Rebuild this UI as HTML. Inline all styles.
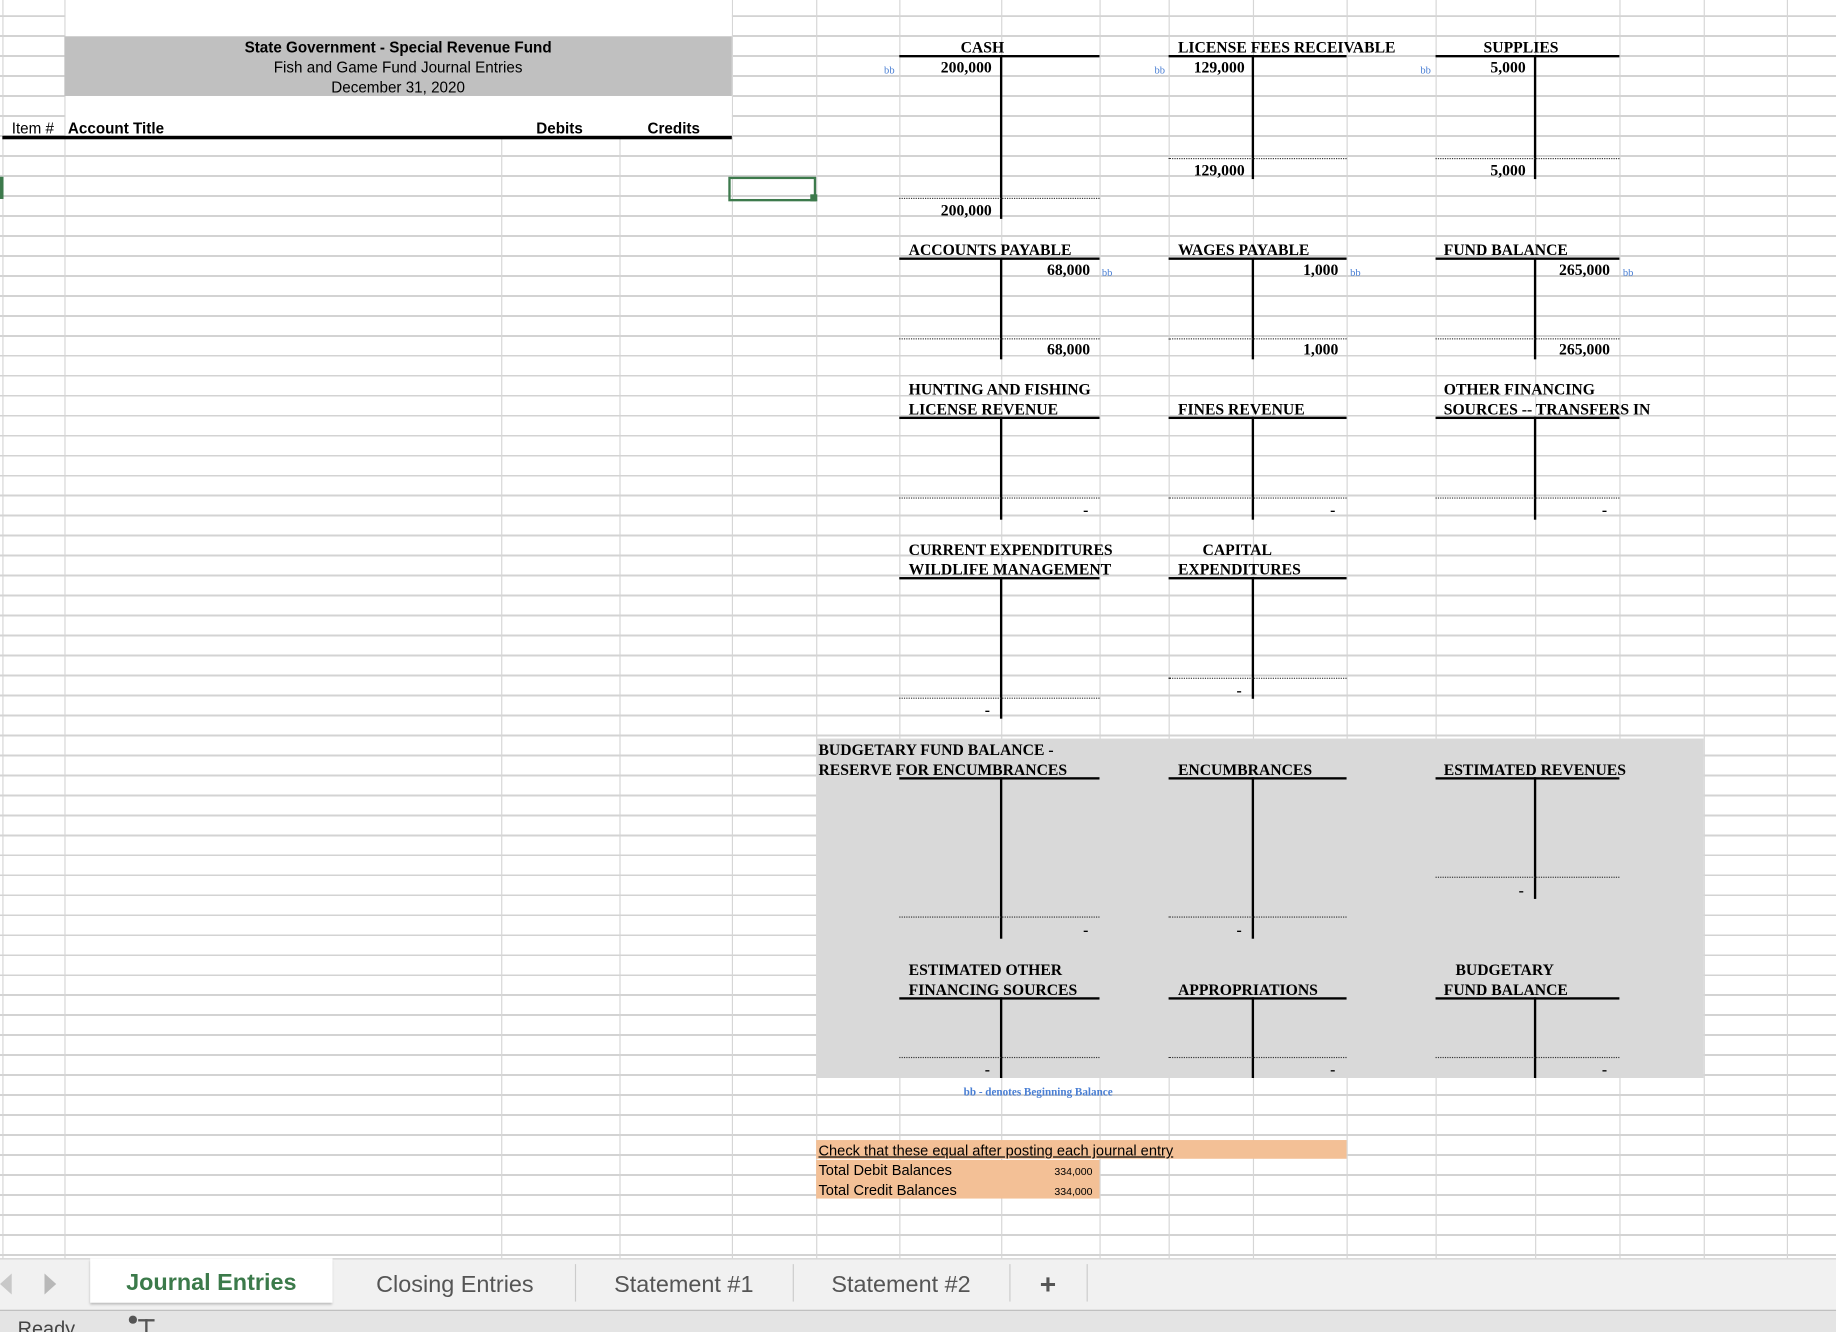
<!DOCTYPE html>
<html><head><meta charset="utf-8"><style>
html,body{margin:0;padding:0;background:#fff;}
body{width:1836px;height:1332px;overflow:hidden;position:relative;}
#w{position:absolute;left:0;top:0;width:1568px;height:1138px;transform:scale(1.17092,1.17047);transform-origin:0 0;overflow:hidden;}
#grid{position:absolute;left:0;top:13.3px;width:1568px;height:1062px;
background-image:repeating-linear-gradient(to bottom,#d3d3d3 0,#d3d3d3 1.6px,transparent 1.6px,transparent 17.07px);}
.c{position:absolute;top:0;width:1px;height:1075px;background:#d6d6d6;}
.a{position:absolute;white-space:nowrap;line-height:14px;}
.t{position:absolute;white-space:nowrap;font-family:"Liberation Serif",serif;font-weight:bold;font-size:13.4px;line-height:14px;color:#000;letter-spacing:0;}
.r{text-align:right;}
.bb{position:absolute;font-family:"Liberation Serif",serif;font-size:9px;color:#4a7fd4;line-height:10px;}
.h{position:absolute;height:2px;background:#000;}
.v{position:absolute;width:1.5px;background:#000;}
.d{position:absolute;height:0;border-top:1.5px dotted #333;}
.s{font-family:"Liberation Sans Narrow","Liberation Sans",sans-serif;font-size:13px;color:#000;}
.tab{position:absolute;top:1080px;height:36px;line-height:36px;font-family:"Liberation Sans",sans-serif;font-size:20px;color:#555;text-align:center;}
.sep{position:absolute;top:1080px;width:1px;height:32px;background:#ccc;}
</style></head><body><div id="w">
<div id="grid"></div>
<div class="c" style="left:2px"></div><div class="c" style="left:55px"></div><div class="c" style="left:428px"></div><div class="c" style="left:529px"></div><div class="c" style="left:625px"></div><div class="c" style="left:697px"></div><div class="c" style="left:768px"></div><div class="c" style="left:855px"></div><div class="c" style="left:939px"></div><div class="c" style="left:998px"></div><div class="c" style="left:1070px"></div><div class="c" style="left:1150px"></div><div class="c" style="left:1226px"></div><div class="c" style="left:1311px"></div><div class="c" style="left:1383px"></div><div class="c" style="left:1455px"></div><div class="c" style="left:1526px"></div>
<div style="position:absolute;left:56px;top:0;width:569px;height:117px;background:#fff"></div>
<div style="position:absolute;left:55px;top:31px;width:570px;height:51px;background:#c0c0c0"></div>
<div class="a s" style="left:55px;width:570px;text-align:center;top:34px;font-weight:bold">State Government - Special Revenue Fund</div>
<div class="a s" style="left:55px;width:570px;text-align:center;top:51px">Fish and Game Fund Journal Entries</div>
<div class="a s" style="left:55px;width:570px;text-align:center;top:68px">December 31, 2020</div>
<div class="a s" style="left:10px;top:103px">Item #</div>
<div class="a s" style="left:58px;top:103px;font-weight:bold">Account Title</div>
<div class="a s" style="left:458px;top:103px;font-weight:bold">Debits</div>
<div class="a s" style="left:553px;top:103px;font-weight:bold">Credits</div>
<div style="position:absolute;left:2px;top:116px;width:623px;height:3px;background:#000"></div>
<div style="position:absolute;left:622px;top:151px;width:71px;height:17px;border:2px solid #3d7a4c"></div>
<div style="position:absolute;left:692px;top:166px;width:6px;height:6px;background:#3d7a4c"></div>
<div style="position:absolute;left:0;top:151px;width:3px;height:19px;background:#3d7a4c"></div>
<div style="position:absolute;left:697px;top:631px;width:758px;height:290px;background:#d9d9d9"></div>

<div class="t" style="left:768px;width:142px;text-align:center;top:34px">CASH</div>
<div class="h" style="left:768px;top:47px;width:171px"></div>
<div class="v" style="left:854px;top:47px;height:140px"></div>
<div class="bb" style="left:755px;top:55px">bb</div>
<div class="t r" style="left:770px;width:77px;top:51px">200,000</div>
<div class="d" style="left:768px;top:169px;width:171px"></div>
<div class="t r" style="left:770px;width:77px;top:173px">200,000</div>
<div class="t" style="left:1006px;top:34px">LICENSE FEES RECEIVABLE</div>
<div class="h" style="left:998px;top:47px;width:152px"></div>
<div class="v" style="left:1069px;top:47px;height:106px"></div>
<div class="bb" style="left:986px;top:55px">bb</div>
<div class="t r" style="left:1000px;width:63px;top:51px">129,000</div>
<div class="d" style="left:998px;top:135px;width:152px"></div>
<div class="t r" style="left:1000px;width:63px;top:139px">129,000</div>
<div class="t" style="left:1226px;width:146px;text-align:center;top:34px">SUPPLIES</div>
<div class="h" style="left:1226px;top:47px;width:157px"></div>
<div class="v" style="left:1310px;top:47px;height:106px"></div>
<div class="bb" style="left:1213px;top:55px">bb</div>
<div class="t r" style="left:1230px;width:73px;top:51px">5,000</div>
<div class="d" style="left:1226px;top:135px;width:157px"></div>
<div class="t r" style="left:1230px;width:73px;top:139px">5,000</div>
<div class="t" style="left:776px;top:207px">ACCOUNTS PAYABLE</div>
<div class="h" style="left:768px;top:220px;width:171px"></div>
<div class="v" style="left:854px;top:220px;height:87px"></div>
<div class="t r" style="left:860px;width:71px;top:224px">68,000</div>
<div class="bb" style="left:941px;top:228px">bb</div>
<div class="d" style="left:768px;top:289px;width:171px"></div>
<div class="t r" style="left:860px;width:71px;top:292px">68,000</div>
<div class="t" style="left:1006px;top:207px">WAGES PAYABLE</div>
<div class="h" style="left:998px;top:220px;width:152px"></div>
<div class="v" style="left:1069px;top:220px;height:87px"></div>
<div class="t r" style="left:1075px;width:68px;top:224px">1,000</div>
<div class="bb" style="left:1153px;top:228px">bb</div>
<div class="d" style="left:998px;top:289px;width:152px"></div>
<div class="t r" style="left:1075px;width:68px;top:292px">1,000</div>
<div class="t" style="left:1233px;top:207px">FUND BALANCE</div>
<div class="h" style="left:1226px;top:220px;width:157px"></div>
<div class="v" style="left:1310px;top:220px;height:87px"></div>
<div class="t r" style="left:1315px;width:60px;top:224px">265,000</div>
<div class="bb" style="left:1386px;top:228px">bb</div>
<div class="d" style="left:1226px;top:289px;width:157px"></div>
<div class="t r" style="left:1315px;width:60px;top:292px">265,000</div>
<div class="t" style="left:776px;top:326px">HUNTING AND FISHING</div>
<div class="t" style="left:776px;top:343px">LICENSE REVENUE</div>
<div class="h" style="left:768px;top:356px;width:171px"></div>
<div class="v" style="left:854px;top:356px;height:88px"></div>
<div class="d" style="left:768px;top:425px;width:171px"></div>
<div class="t" style="left:925px;top:429px">-</div>
<div class="t" style="left:1006px;top:343px">FINES REVENUE</div>
<div class="h" style="left:998px;top:356px;width:152px"></div>
<div class="v" style="left:1069px;top:356px;height:88px"></div>
<div class="d" style="left:998px;top:425px;width:152px"></div>
<div class="t" style="left:1136px;top:429px">-</div>
<div class="t" style="left:1233px;top:326px">OTHER FINANCING</div>
<div class="t" style="left:1233px;top:343px">SOURCES -- TRANSFERS IN</div>
<div class="h" style="left:1226px;top:356px;width:157px"></div>
<div class="v" style="left:1310px;top:356px;height:88px"></div>
<div class="d" style="left:1226px;top:425px;width:157px"></div>
<div class="t" style="left:1368px;top:429px">-</div>
<div class="t" style="left:776px;top:463px">CURRENT EXPENDITURES</div>
<div class="t" style="left:776px;top:480px">WILDLIFE MANAGEMENT</div>
<div class="h" style="left:768px;top:493px;width:171px"></div>
<div class="v" style="left:854px;top:493px;height:121px"></div>
<div class="d" style="left:768px;top:596px;width:171px"></div>
<div class="t" style="left:841px;top:600px">-</div>
<div class="t" style="left:1027px;top:463px">CAPITAL</div>
<div class="t" style="left:1006px;top:480px">EXPENDITURES</div>
<div class="h" style="left:998px;top:493px;width:152px"></div>
<div class="v" style="left:1069px;top:493px;height:104px"></div>
<div class="d" style="left:998px;top:579px;width:152px"></div>
<div class="t" style="left:1056px;top:583px">-</div>
<div class="t" style="left:699px;top:634px">BUDGETARY FUND BALANCE -</div>
<div class="t" style="left:699px;top:651px">RESERVE FOR ENCUMBRANCES</div>
<div class="h" style="left:768px;top:664px;width:171px"></div>
<div class="v" style="left:854px;top:664px;height:138px"></div>
<div class="d" style="left:768px;top:783px;width:171px"></div>
<div class="t" style="left:925px;top:788px">-</div>
<div class="t" style="left:1006px;top:651px">ENCUMBRANCES</div>
<div class="h" style="left:998px;top:664px;width:152px"></div>
<div class="v" style="left:1069px;top:664px;height:138px"></div>
<div class="d" style="left:998px;top:783px;width:152px"></div>
<div class="t" style="left:1056px;top:788px">-</div>
<div class="t" style="left:1233px;top:651px">ESTIMATED REVENUES</div>
<div class="h" style="left:1226px;top:664px;width:157px"></div>
<div class="v" style="left:1310px;top:664px;height:104px"></div>
<div class="d" style="left:1226px;top:749px;width:157px"></div>
<div class="t" style="left:1297px;top:754px">-</div>
<div class="t" style="left:776px;top:822px">ESTIMATED OTHER</div>
<div class="t" style="left:776px;top:839px">FINANCING SOURCES</div>
<div class="h" style="left:768px;top:852px;width:171px"></div>
<div class="v" style="left:854px;top:852px;height:69px"></div>
<div class="d" style="left:768px;top:903px;width:171px"></div>
<div class="t" style="left:841px;top:907px">-</div>
<div class="t" style="left:1006px;top:839px">APPROPRIATIONS</div>
<div class="h" style="left:998px;top:852px;width:152px"></div>
<div class="v" style="left:1069px;top:852px;height:69px"></div>
<div class="d" style="left:998px;top:903px;width:152px"></div>
<div class="t" style="left:1136px;top:907px">-</div>
<div class="t" style="left:1243px;top:822px">BUDGETARY</div>
<div class="t" style="left:1233px;top:839px">FUND BALANCE</div>
<div class="h" style="left:1226px;top:852px;width:157px"></div>
<div class="v" style="left:1310px;top:852px;height:69px"></div>
<div class="d" style="left:1226px;top:903px;width:157px"></div>
<div class="t" style="left:1368px;top:907px">-</div>
<div class="a" style="left:823px;top:927px;font-family:'Liberation Serif',serif;font-weight:bold;font-size:9.5px;color:#4a7fd4">bb - denotes Beginning Balance</div>
<div style="position:absolute;left:697px;top:974px;width:453px;height:16px;background:#f3c096"></div>
<div style="position:absolute;left:697px;top:991px;width:242px;height:33px;background:#f3c096"></div>
<div class="a s" style="left:699px;top:976px;font-size:12.5px;text-decoration:underline">Check that these equal after posting each journal entry</div>
<div class="a s" style="left:699px;top:993px;font-size:12.5px">Total Debit Balances</div>
<div class="a s" style="left:860px;width:73px;text-align:right;top:994px;font-size:9px">334,000</div>
<div class="a s" style="left:699px;top:1010px;font-size:12.5px">Total Credit Balances</div>
<div class="a s" style="left:860px;width:73px;text-align:right;top:1011px;font-size:9px">334,000</div>
<div style="position:absolute;left:0;top:1075px;width:1568px;height:45px;background:#f1f1f1;border-top:1px solid #d0d0d0"></div>
<div style="position:absolute;left:0;top:1088px;width:0;height:0;border-top:9px solid transparent;border-bottom:9px solid transparent;border-right:10px solid #c8c8c8"></div>
<div style="position:absolute;left:38px;top:1088px;width:0;height:0;border-top:9px solid transparent;border-bottom:9px solid transparent;border-left:10px solid #b8b8b8"></div>
<div style="position:absolute;left:77px;top:1075px;width:207px;height:38px;background:#fff;box-shadow:0 2px 2px #bbb"></div>
<div class="tab" style="left:77px;width:207px;color:#3b7a4a;font-weight:bold;top:1078px">Journal Entries</div>
<div class="tab" style="left:290px;width:197px">Closing Entries</div>
<div class="sep" style="left:491px"></div>
<div class="tab" style="left:491px;width:186px">Statement #1</div>
<div class="sep" style="left:677px"></div>
<div class="tab" style="left:677px;width:185px">Statement #2</div>
<div class="sep" style="left:862px"></div>
<div class="tab" style="left:862px;width:66px;font-weight:bold;font-size:24px">+</div>
<div class="sep" style="left:928px"></div>
<div style="position:absolute;left:0;top:1119px;width:1568px;height:19px;background:#e4e4e4;border-top:1px solid #bdbdbd"></div>
<div class="a" style="left:15px;top:1129px;font-family:'Liberation Sans',sans-serif;font-size:17px;color:#444">Ready</div>
<div style="position:absolute;left:110px;top:1124px;width:7px;height:7px;border-radius:50%;background:#555"></div>
<div style="position:absolute;left:118px;top:1127px;width:14px;height:2px;background:#555"></div>
<div style="position:absolute;left:124px;top:1127px;width:2px;height:11px;background:#555"></div>
</div></body></html>
